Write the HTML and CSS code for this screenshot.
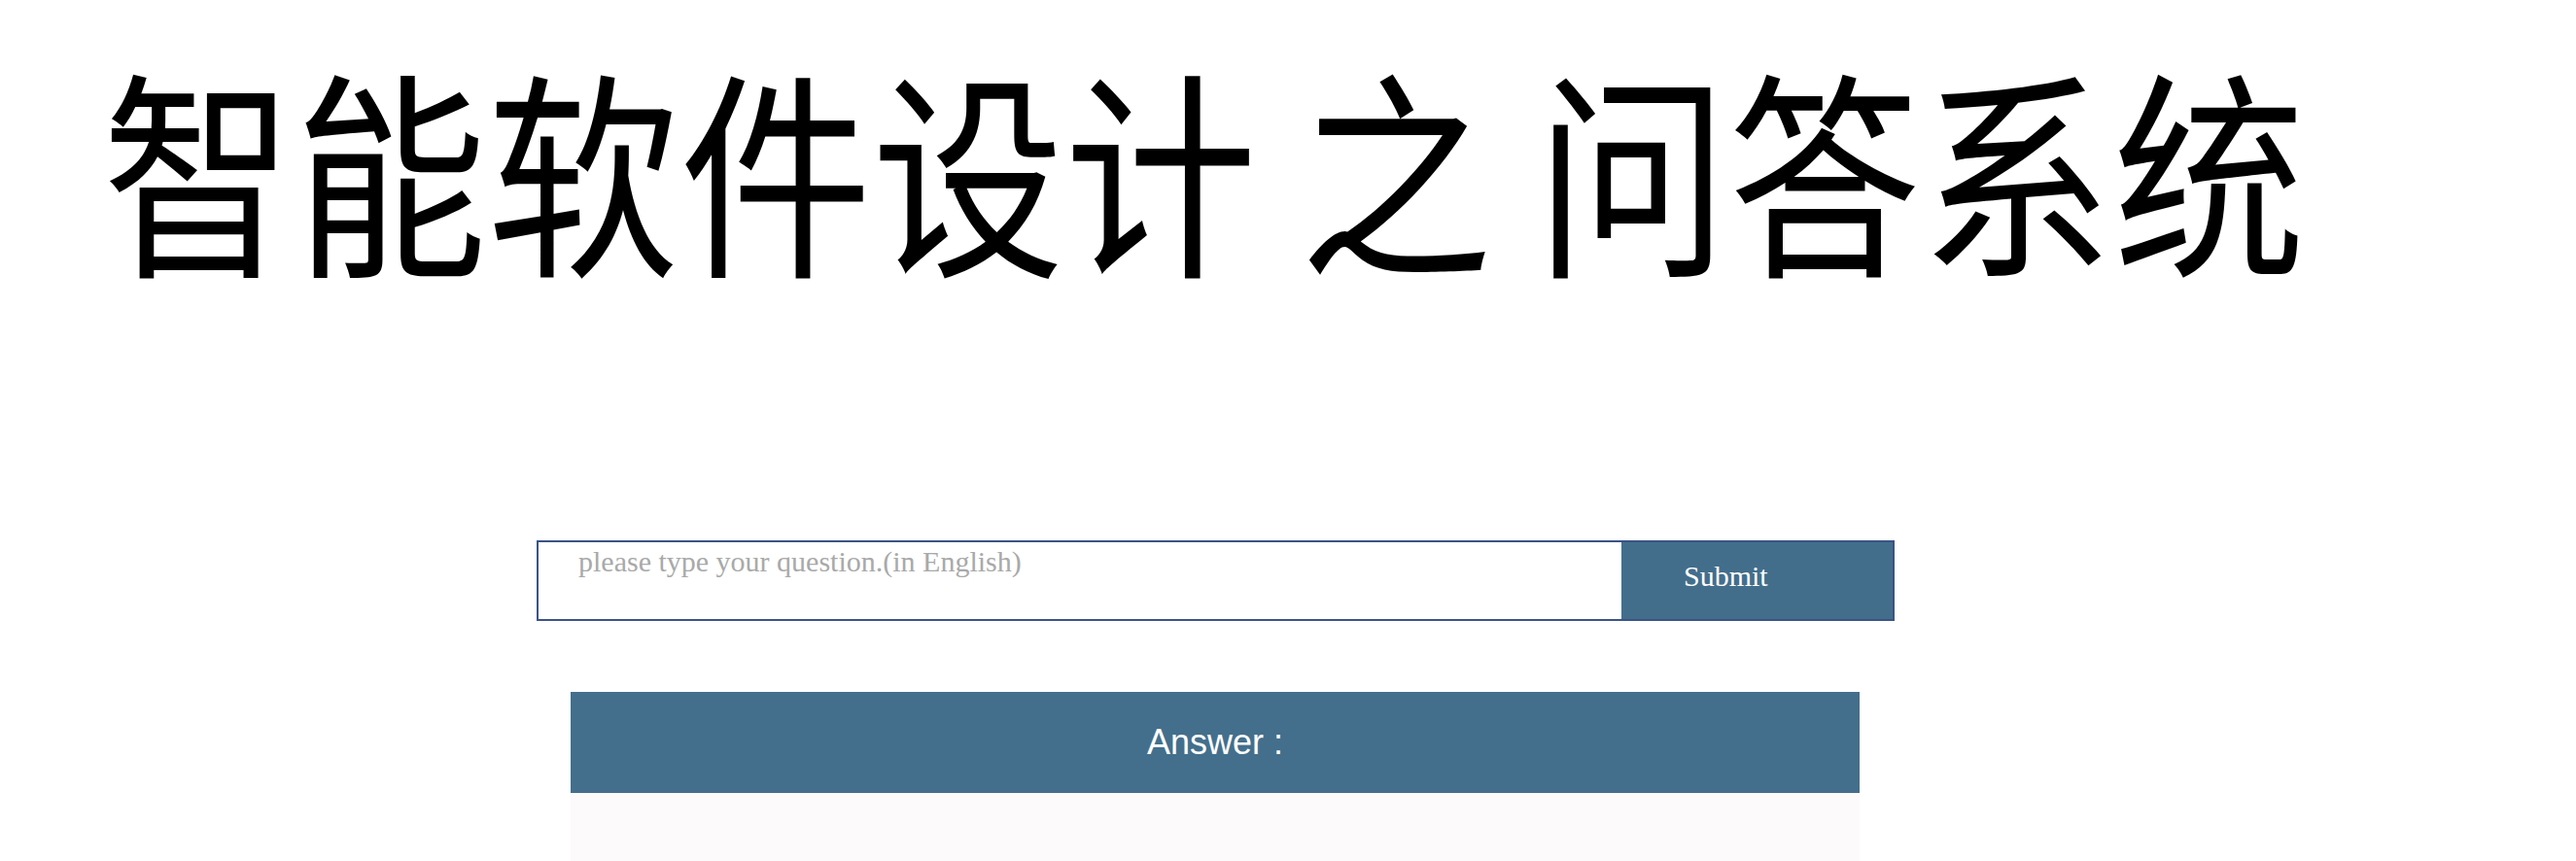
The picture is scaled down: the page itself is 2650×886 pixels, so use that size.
FILE: index.html
```html
<!DOCTYPE html>
<html lang="zh">
<head>
<meta charset="utf-8">
<title>智能软件设计 之 问答系统</title>
<link rel="stylesheet" href="styles.css">
</head>
<body>
<h1 class="title">智能软件设计 之 问答系统</h1>
<form class="ask">
  <textarea class="ask-input" placeholder="please type your question.(in English)"></textarea>
  <button class="ask-submit" type="button">Submit</button>
</form>
<section class="answer">
  <div class="answer-head">Answer :</div>
  <div class="answer-body"></div>
</section>
</body>
</html>
```
FILE: styles.css
```css
html, body {
  margin: 0;
  padding: 0;
  background: #ffffff;
}

.title {
  margin: 70px 0 0 105px;
  font: 400 198px/200px "Noto Sans CJK SC", sans-serif;
  color: #000;
  white-space: nowrap;
  transform: scaleY(1.14);
  transform-origin: 0 50%;
}

.ask {
  display: flex;
  box-sizing: border-box;
  width: 1397px;
  height: 83px;
  margin: 286px 0 0 552px;
  border: 2px solid #3b5386;
}

.ask-input {
  flex: 1;
  margin: 0;
  border: 0;
  outline: none;
  resize: none;
  padding: 3px 0 0 41px;
  font: 30px "Liberation Serif", serif;
  color: #000;
  background: #fff;
}

.ask-input::placeholder {
  color: #a9a9a9;
  opacity: 1;
}

.ask-submit {
  width: 279px;
  margin: 0;
  border: 0;
  padding: 0 0 10px 64px;
  text-align: left;
  background: #436e8b;
  color: #fff;
  font: 30px "Liberation Serif", serif;
}

.answer {
  width: 1326px;
  margin: 73px 0 0 587px;
}

.answer-head {
  height: 104px;
  background: #436f8c;
  color: #fff;
  font: 36px/104px "Liberation Sans", Arial, sans-serif;
  text-align: center;
}

.answer-body {
  height: 70px;
  background: #fcfafb;
}
```
